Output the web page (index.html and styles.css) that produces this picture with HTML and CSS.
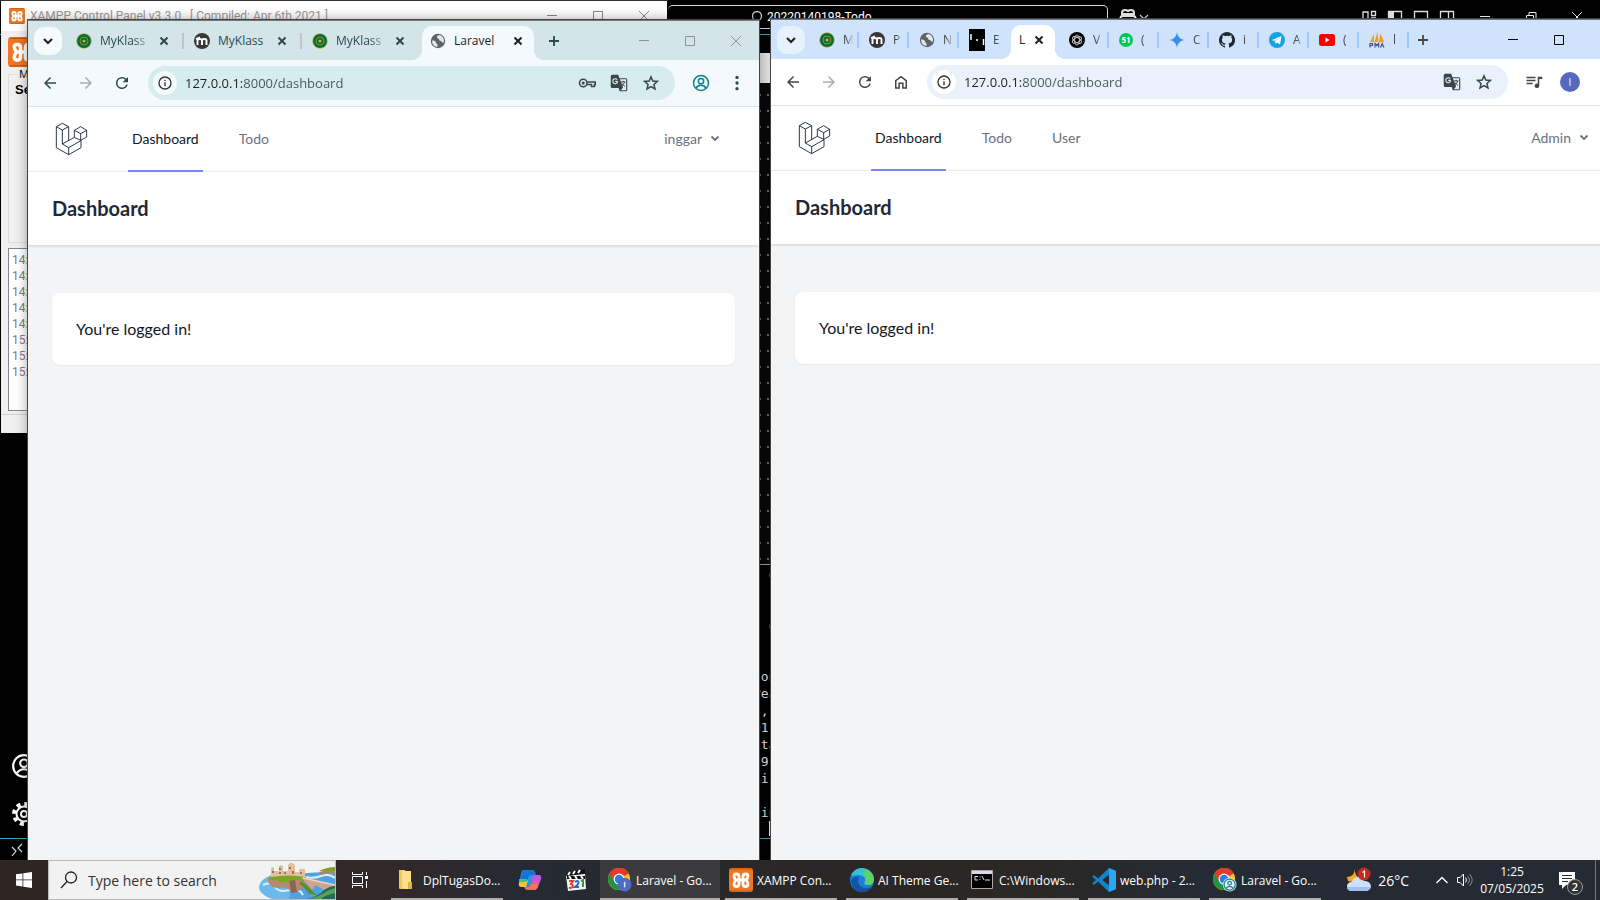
FILE: index.html
```html
<!DOCTYPE html>
<html lang="en">
<head>
<meta charset="utf-8">
<title>Desktop</title>
<link rel="stylesheet" href="styles.css">
</head>
<body>
<svg class="defs" aria-hidden="true">
  <symbol id="i-down" viewBox="0 0 16 16"><path d="M4 6l4 4 4-4" fill="none" stroke="currentColor" stroke-width="2"/></symbol>
  <symbol id="i-x" viewBox="0 0 16 16"><path d="M4.500 4.500l7 7m0-7l-7 7" fill="none" stroke="currentColor" stroke-width="2"/></symbol>
  <symbol id="i-plus" viewBox="0 0 16 16"><path d="M8 3v10M3 8h10" fill="none" stroke="currentColor" stroke-width="1.800"/></symbol>
  <symbol id="i-min" viewBox="0 0 16 16"><path d="M3 7.500h10" stroke="currentColor"/></symbol>
  <symbol id="i-max" viewBox="0 0 16 16"><path d="M3.500 3.500h9v9h-9z" fill="none" stroke="currentColor"/></symbol>
  <symbol id="i-close" viewBox="0 0 16 16"><path d="M3 3l10 10M13 3L3 13" fill="none" stroke="currentColor"/></symbol>
  <symbol id="i-back" viewBox="0 0 24 24"><path d="M20 11H7.800l5.600-5.600L12 4l-8 8 8 8 1.400-1.400L7.800 13H20z" fill="currentColor"/></symbol>
  <symbol id="i-fwd" viewBox="0 0 24 24"><path d="M4 11h12.200l-5.600-5.600L12 4l8 8-8 8-1.400-1.400 5.600-5.600H4z" fill="currentColor"/></symbol>
  <symbol id="i-reload" viewBox="0 0 24 24"><path d="M17.650 6.350A7.950 7.950 0 0 0 12 4a8 8 0 1 0 7.730 10h-2.080A6 6 0 1 1 12 6c1.660 0 3.140.69 4.220 1.780L13 11h7V4z" fill="currentColor"/></symbol>
  <symbol id="i-home" viewBox="0 0 24 24"><path d="M5 10.200V20h4.500v-6.500h5V20H19v-9.800L12 4.800z" fill="none" stroke="currentColor" stroke-width="2"/></symbol>
  <symbol id="i-info" viewBox="0 0 24 24"><circle cx="12" cy="12" r="9" fill="none" stroke="currentColor" stroke-width="2"/><path d="M11 7h2v2h-2zm0 4h2v6h-2z" fill="currentColor"/></symbol>
  <symbol id="i-key" viewBox="0 0 24 24"><circle cx="7" cy="12" r="5" fill="none" stroke="currentColor" stroke-width="2"/><circle cx="7" cy="12" r="2" fill="currentColor"/><path d="M12 10.500h11v3.500h-1v2.500h-4V14h-6" fill="none" stroke="currentColor" stroke-width="2"/></symbol>
  <symbol id="i-translate" viewBox="0 0 24 24"><path d="M3 1h8l1.600 4.500H21a2 2 0 0 1 2 2V21a2 2 0 0 1-2 2h-8l-1.500-4.500H3a2 2 0 0 1-2-2V3a2 2 0 0 1 2-2z" fill="currentColor"/><path d="M13.200 7l4.300 11-3 3.500H21.500V7z" fill="#e7f1f5"/><path d="M14.500 10.500h6M17.500 9v1.500M19.500 10.500c-.5 2-2 4-3.500 5M16 12.500c1 1.500 2 3 4 4" stroke="currentColor" stroke-width="1.300" fill="none"/><path d="M10.200 9.800H7M9.700 7.700a3.300 3.300 0 1 0 .6 2.200" stroke="#e7f1f5" stroke-width="1.500" fill="none"/></symbol>
  <symbol id="i-star" viewBox="0 0 24 24"><path d="M12 3.800l2.400 5.600 6.100.5-4.600 4 1.400 6L12 16.700l-5.300 3.200 1.400-6-4.600-4 6.100-.5z" fill="none" stroke="currentColor" stroke-width="2"/></symbol>
  <symbol id="i-user" viewBox="0 0 24 24"><circle cx="12" cy="12" r="10" fill="none" stroke="currentColor" stroke-width="2"/><circle cx="12" cy="9.500" r="3.500" fill="none" stroke="currentColor" stroke-width="2"/><path d="M5 19c2-3 4-4 7-4s5 1 7 4" fill="none" stroke="currentColor" stroke-width="2"/></symbol>
  <symbol id="i-dots" viewBox="0 0 24 24"><circle cx="12" cy="4.500" r="2.200" fill="currentColor"/><circle cx="12" cy="12" r="2.200" fill="currentColor"/><circle cx="12" cy="19.500" r="2.200" fill="currentColor"/></symbol>
  <symbol id="i-music" viewBox="0 0 24 24"><path d="M2 5h12v2H2zm0 4h12v2H2zm0 4h8v2H2zM17 5h6v3h-4v9a3 3 0 1 1-2-2.800z" fill="currentColor"/></symbol>
  <symbol id="i-seal" viewBox="0 0 16 16"><circle cx="8" cy="8" r="7.300" fill="#0b6b3a" stroke="#c9b532" stroke-width="1" stroke-dasharray="1.500 1"/><circle cx="8" cy="8" r="4" fill="none" stroke="#7d9a2a" stroke-width="1"/><circle cx="8" cy="8" r="1.600" fill="#c2ae2c"/></symbol>
  <symbol id="i-moodle" viewBox="0 0 16 16"><circle cx="8" cy="8" r="8" fill="#373737"/><path d="M3.500 12V7.500C3.500 5.500 8 5.500 8 7.500V12M8 7.500c0-2 4.500-2 4.500 0V12M2 6.200l4-1.800" fill="none" stroke="#fff" stroke-width="1.900"/></symbol>
  <symbol id="i-globe" viewBox="0 0 16 16"><circle cx="8" cy="8" r="7.200" fill="#5f6368"/><path d="M2 7.500c2 0 4 .5 4 2s1.500 1 1.500 2.500V14C4 13.500 2 11 2 7.500zM9 2c-1 1-2.500 1-2 2.500S9 5 9 6.500 12 8 12.500 9.500 14 9 14 8c0-3-2-5.500-5-6z" fill="#dfe8ec"/></symbol>
  <symbol id="i-black" viewBox="0 0 16 22"><path d="M0 0h16v22H0z" fill="#000"/><path d="M2 5v6M14.500 10v6M7 11h2" stroke="#fff" stroke-width="1.500"/></symbol>
  <symbol id="i-gpt" viewBox="0 0 16 16"><circle cx="8" cy="8" r="8" fill="#000"/><g fill="none" stroke="#ccc" stroke-width=".9"><ellipse cx="8" cy="8" rx="2.400" ry="5"/><ellipse cx="8" cy="8" rx="2.400" ry="5" transform="rotate(60 8 8)"/><ellipse cx="8" cy="8" rx="2.400" ry="5" transform="rotate(120 8 8)"/></g></symbol>
  <symbol id="i-spark" viewBox="0 0 16 16"><path d="M8 0c.7 5 3 7.300 8 8-5 .7-7.300 3-8 8-.7-5-3-7.300-8-8 5-.7 7.300-3 8-8z" fill="#3b8de8"/></symbol>
  <symbol id="i-github" viewBox="0 0 16 16"><path d="M8 0a8 8 0 0 0-2.530 15.590c.4.070.55-.17.55-.38v-1.490c-2.010.37-2.530-.49-2.690-.94-.09-.23-.48-.94-.82-1.130-.28-.15-.68-.52-.01-.53.63-.01 1.080.58 1.230.82.720 1.210 1.870.87 2.330.66.070-.52.280-.87.510-1.070-1.780-.2-3.640-.89-3.640-3.950 0-.87.310-1.590.82-2.150-.08-.2-.36-1.020.08-2.120 0 0 .67-.21 2.200.82a7.500 7.500 0 0 1 4 0c1.530-1.040 2.200-.82 2.200-.82.440 1.100.160 1.920.080 2.120.51.560.82 1.270.82 2.150 0 3.070-1.870 3.750-3.650 3.950.29.250.54.730.54 1.480v2.200c0 .21.150.46.550.38A8 8 0 0 0 8 0z" fill="#1f2933"/></symbol>
  <symbol id="i-telegram" viewBox="0 0 16 16"><circle cx="8" cy="8" r="8" fill="#14a3e0"/><path d="M3 8l9.500-4-1.500 8.500-3-2-1.500 1.500-.5-3L10.500 6 5 9z" fill="#fff"/></symbol>
  <symbol id="i-youtube" viewBox="0 0 16 16"><rect y="2" width="16" height="12" rx="2.500" fill="#f00"/><path d="M6.500 5.500v5l4-2.500z" fill="#fff"/></symbol>
  <symbol id="i-sails" viewBox="0 0 16 16"><path d="M1 10L5 2v8zM5.500 10L8.500 0l1 10zM10 10l1-8c2 2 3 5 4 8z" fill="#f59a23"/><path d="M1 15.500v-4h2.500v2H1M6 15.500v-4l1.800 2 1.800-2v4M11.500 15.500l1.700-4 1.700 4" fill="none" stroke="#4a4d80" stroke-width="1.200"/></symbol>
  <symbol id="i-laravel" viewBox="156 63 108 108"><path d="M169 80l18-10 19 10-19 10zV143l37 21 37-21v-22M187 90v42l19 11v21M206 80v42M187 132l36-20M206 143l37-21M223 91l19-11 18 11-18 10zv21l19 9 18-10V91M242 101v20" fill="none" stroke="#1f2937" stroke-width="2.800" stroke-linejoin="round"/></symbol>
  <symbol id="i-xampp" viewBox="0 0 24 24"><rect width="24" height="24" rx="3" fill="#ef7622"/><path d="M1 1h22M1 23h22" stroke="#b9571a"/><path d="M10 10.500V8.500Q10 6 7.500 6T5 8q0 2 2 4-2 2-2 4 0 2.500 2.500 2.500T10 16v-2M14 10.500V8.500Q14 6 16.500 6T19 8q0 2-2 4 2 2 2 4 0 2.500-2.500 2.500T14 16v-2M7.500 12h9" fill="none" stroke="#fff" stroke-width="2.800" stroke-linecap="round" stroke-linejoin="round"/></symbol>
  <symbol id="i-chrome" viewBox="0 0 24 24"><circle cx="12" cy="12" r="12" fill="#fbc116"/><path d="M12 12L1.600 6A12 12 0 0 1 22.400 6z" fill="#e33b2e"/><path d="M1.600 6A12 12 0 0 0 12 24l5.200-9L12 12z" fill="#229342"/><path d="M12 6h10.400A12 12 0 0 0 1.600 6l5.200 9z" fill="#e33b2e"/><circle cx="12" cy="12" r="6" fill="#fff"/><circle cx="12" cy="12" r="4.700" fill="#2b7de9"/></symbol>
</svg>

<main class="desktop">
  <section class="vscode" aria-label="Code editor">
    <header class="code-top">
      <span class="code-back"></span>
      <button class="code-search"><svg width="14" height="14" viewBox="0 0 14 14"><circle cx="8" cy="6" r="4.500" fill="none" stroke="#ccc" stroke-width="1.300"/><path d="M5 9l-4 4" stroke="#ccc"/></svg>20220140198-Todo</button>
      <button class="code-copilot" aria-label="Copilot"><svg width="32" height="16" viewBox="0 0 32 16"><path d="M4 6V4q0-3 3-3t3 2q0-2 3-2t3 3v2M4 7q-2 1-2 5v2h16v-2q0-4-2-5zM7 10v3M13 10v3M4 5h12" fill="none" stroke="#e0e0e0" stroke-width="2"/><path d="M22 6l4 4 4-4" fill="none" stroke="#ccc" stroke-width="1.200"/></svg></button>
      <div class="code-layouts">
        <button aria-label="Layout"><svg width="16" height="16" viewBox="0 0 16 16"><path d="M2 15V3h5v12M10.500 2.500h4v4h-4zM10 9h5" fill="none" stroke="#ddd" stroke-width="1.300"/></svg></button>
        <button aria-label="Side bar"><svg width="16" height="16" viewBox="0 0 16 16"><path d="M1.500 2.500h13v12h-13z" fill="none" stroke="#ddd" stroke-width="1.300"/><path d="M2 3h5v12H2z" fill="#ddd"/></svg></button>
        <button aria-label="Panel"><svg width="16" height="16" viewBox="0 0 16 16"><path d="M1.500 2.500h13v12h-13z" fill="none" stroke="#ddd" stroke-width="1.300"/></svg></button>
        <button aria-label="Secondary side bar"><svg width="16" height="16" viewBox="0 0 16 16"><path d="M1.500 2.500h13v12h-13zM9.500 3v12" fill="none" stroke="#ddd" stroke-width="1.300"/></svg></button>
      </div>
      <div class="caps caps-light">
        <button aria-label="Minimize"><svg><use href="#i-min"/></svg></button>
        <button aria-label="Restore"><svg viewBox="0 0 16 16"><path d="M3.500 6.500h7v7h-7zM6 6V3.500h7v7h-2" fill="none" stroke="currentColor"/></svg></button>
        <button aria-label="Close"><svg><use href="#i-close"/></svg></button>
      </div>
    </header>
    <div class="code-mid">
      <nav class="activity" aria-label="Activity">
        <button aria-label="Accounts"><svg width="26" height="26"><use href="#i-user"/></svg></button>
        <button aria-label="Manage"><svg width="26" height="26" viewBox="0 0 26 26"><circle cx="13" cy="13" r="10" fill="none" stroke="#fff" stroke-width="4" stroke-dasharray="4 3.850"/><circle cx="13" cy="13" r="7.500" fill="#000" stroke="#fff" stroke-width="2"/><circle cx="13" cy="13" r="3" fill="none" stroke="#fff" stroke-width="2"/></svg></button>
      </nav>
      <div class="code-main">
        <div class="code-tabs"></div>
        <div class="minimap"></div>
        <pre class="terminal"><b>&#8226; </b><i>g</i>


<b>&#8226; </b><i>g</i>


lon
rea
),
011
ita
/9s
hii

gin
<b>&#8226; </b><span class="cursor"></span></pre>
      </div>
    </div>
    <footer class="code-status"><svg width="12" height="14" viewBox="0 0 12 14"><path d="M1 4l4 4-4 5M11 1L7 5l4 4" fill="none" stroke="#ddd" stroke-width="1.200"/></svg></footer>
  </section>

  <section class="xampp" aria-label="XAMPP Control Panel">
    <header class="xampp-bar">
      <svg width="16" height="16"><use href="#i-xampp"/></svg>
      <span class="xampp-title">XAMPP Control Panel v3.3.0 &nbsp; [ Compiled: Apr 6th 2021 ]</span>
      <div class="caps caps-grey">
        <button aria-label="Minimize"><svg><use href="#i-min"/></svg></button>
        <button aria-label="Maximize"><svg><use href="#i-max"/></svg></button>
        <button aria-label="Close"><svg><use href="#i-close"/></svg></button>
      </div>
    </header>
    <div class="xampp-body">
      <svg class="xampp-logo" width="30" height="30"><use href="#i-xampp"/></svg>
      <fieldset class="modules"><legend>Modules</legend><b>Service</b></fieldset>
      <div class="log">14:<br>14:<br>14:<br>14:<br>14:<br>15:<br>15:<br>15:</div>
    </div>
    <footer class="xampp-foot"></footer>
  </section>

  <section class="browser left" aria-label="Browser, inggar">
    <header class="strip">
      <button class="drop" aria-label="Search tabs"><svg width="16" height="16"><use href="#i-down"/></svg></button>
      <div class="tab"><button class="tab-main"><svg width="16" height="16"><use href="#i-seal"/></svg><span>MyKlass</span></button><button class="tab-x" aria-label="Close tab"><svg width="16" height="16"><use href="#i-x"/></svg></button></div>
      <div class="tab"><button class="tab-main"><svg width="16" height="16"><use href="#i-moodle"/></svg><span class="full">MyKlass</span></button><button class="tab-x" aria-label="Close tab"><svg width="16" height="16"><use href="#i-x"/></svg></button></div>
      <div class="tab last"><button class="tab-main"><svg width="16" height="16"><use href="#i-seal"/></svg><span>MyKlass</span></button><button class="tab-x" aria-label="Close tab"><svg width="16" height="16"><use href="#i-x"/></svg></button></div>
      <div class="tab active"><button class="tab-main"><svg width="16" height="16"><use href="#i-globe"/></svg><span class="full">Laravel</span></button><button class="tab-x" aria-label="Close tab"><svg width="16" height="16"><use href="#i-x"/></svg></button></div>
      <button class="new" aria-label="New tab"><svg width="16" height="16"><use href="#i-plus"/></svg></button>
      <div class="caps caps-dim">
        <button aria-label="Minimize"><svg><use href="#i-min"/></svg></button>
        <button aria-label="Maximize"><svg><use href="#i-max"/></svg></button>
        <button aria-label="Close"><svg><use href="#i-close"/></svg></button>
      </div>
    </header>
    <div class="toolbar">
      <button class="tool" aria-label="Back"><svg><use href="#i-back"/></svg></button>
      <button class="tool off" aria-label="Forward"><svg><use href="#i-fwd"/></svg></button>
      <button class="tool" aria-label="Reload"><svg><use href="#i-reload"/></svg></button>
      <div class="omni">
        <button class="site" aria-label="Site information"><svg><use href="#i-info"/></svg></button>
        <input class="url" type="text" aria-label="Address" value="127.0.0.1:8000/dashboard">
        <button class="act" aria-label="Passwords"><svg><use href="#i-key"/></svg></button>
        <button class="act" aria-label="Translate"><svg><use href="#i-translate"/></svg></button>
        <button class="act" aria-label="Bookmark"><svg><use href="#i-star"/></svg></button>
      </div>
      <button class="tool teal" aria-label="Profile"><svg><use href="#i-user"/></svg></button>
      <button class="tool" aria-label="Menu"><svg><use href="#i-dots"/></svg></button>
    </div>
    <div class="page">
      <nav class="nav">
        <a class="logo" href="#" aria-label="Laravel"><svg width="36" height="36"><use href="#i-laravel"/></svg></a>
        <a class="link on" href="#">Dashboard</a>
        <a class="link" href="#">Todo</a>
        <button class="who">inggar<svg width="16" height="16" viewBox="0 0 16 16"><path d="M4.500 6.500L8 10l3.500-3.500" fill="none" stroke="#6b7280" stroke-width="1.800"/></svg></button>
      </nav>
      <div class="head"><h1>Dashboard</h1></div>
      <div class="body"><div class="card">You're logged in!</div></div>
    </div>
  </section>

  <section class="browser right" aria-label="Browser, Admin">
    <header class="strip">
      <button class="drop" aria-label="Search tabs"><svg width="16" height="16"><use href="#i-down"/></svg></button>
      <div class="tab"><button class="tab-main"><svg width="16" height="16"><use href="#i-seal"/></svg><span>M</span></button></div>
      <div class="tab"><button class="tab-main"><svg width="16" height="16"><use href="#i-moodle"/></svg><span>P</span></button></div>
      <div class="tab"><button class="tab-main"><svg width="16" height="16"><use href="#i-globe"/></svg><span>N</span></button></div>
      <div class="tab last"><button class="tab-main"><svg width="16" height="22"><use href="#i-black"/></svg><span>E</span></button></div>
      <div class="tab active"><button class="tab-main"><span class="full">L</span></button><button class="tab-x" aria-label="Close tab"><svg width="16" height="16"><use href="#i-x"/></svg></button></div>
      <div class="tab"><button class="tab-main"><svg width="16" height="16"><use href="#i-gpt"/></svg><span>V</span></button></div>
      <div class="tab"><button class="tab-main"><em class="count">51</em><span>(</span></button></div>
      <div class="tab"><button class="tab-main"><svg width="16" height="16"><use href="#i-spark"/></svg><span>C</span></button></div>
      <div class="tab"><button class="tab-main"><svg width="16" height="16"><use href="#i-github"/></svg><span>i</span></button></div>
      <div class="tab"><button class="tab-main"><svg width="16" height="16"><use href="#i-telegram"/></svg><span>A</span></button></div>
      <div class="tab"><button class="tab-main"><svg width="16" height="16"><use href="#i-youtube"/></svg><span>(</span></button></div>
      <div class="tab"><button class="tab-main"><svg width="16" height="16"><use href="#i-sails"/></svg><span>l</span></button></div>
      <button class="new" aria-label="New tab"><svg width="16" height="16"><use href="#i-plus"/></svg></button>
      <div class="caps">
        <button aria-label="Minimize"><svg><use href="#i-min"/></svg></button>
        <button aria-label="Maximize"><svg><use href="#i-max"/></svg></button>
        <button aria-label="Close"><svg><use href="#i-close"/></svg></button>
      </div>
    </header>
    <div class="toolbar">
      <button class="tool" aria-label="Back"><svg><use href="#i-back"/></svg></button>
      <button class="tool off" aria-label="Forward"><svg><use href="#i-fwd"/></svg></button>
      <button class="tool" aria-label="Reload"><svg><use href="#i-reload"/></svg></button>
      <button class="tool" aria-label="Home"><svg><use href="#i-home"/></svg></button>
      <div class="omni">
        <button class="site" aria-label="Site information"><svg><use href="#i-info"/></svg></button>
        <input class="url" type="text" aria-label="Address" value="127.0.0.1:8000/dashboard">
        <button class="act" aria-label="Translate"><svg><use href="#i-translate"/></svg></button>
        <button class="act" aria-label="Bookmark"><svg><use href="#i-star"/></svg></button>
      </div>
      <button class="tool" aria-label="Media"><svg><use href="#i-music"/></svg></button>
      <button class="tool"><em class="avatar">I</em></button>
      <button class="tool" aria-label="Menu"><svg><use href="#i-dots"/></svg></button>
    </div>
    <div class="page">
      <nav class="nav">
        <a class="logo" href="#" aria-label="Laravel"><svg width="36" height="36"><use href="#i-laravel"/></svg></a>
        <a class="link on" href="#">Dashboard</a>
        <a class="link" href="#">Todo</a>
        <a class="link" href="#">User</a>
        <button class="who">Admin<svg width="16" height="16" viewBox="0 0 16 16"><path d="M4.500 6.500L8 10l3.500-3.500" fill="none" stroke="#6b7280" stroke-width="1.800"/></svg></button>
      </nav>
      <div class="head"><h1>Dashboard</h1></div>
      <div class="body"><div class="card">You're logged in!</div></div>
    </div>
  </section>
</main>

<footer class="taskbar">
  <button class="start" aria-label="Start"><svg width="16" height="16" viewBox="0 0 16 16"><path d="M0 2.300l6.500-.9v6.100H0zM7.300 1.300L16 0v7.500H7.300zM0 8.300h6.500v6.200L0 13.600zM7.300 8.300H16V16l-8.700-1.300z" fill="#fff"/></svg></button>
  <label class="search">
    <svg width="18" height="18" viewBox="0 0 18 18"><circle cx="11" cy="6.500" r="5.500" fill="none" stroke="#222" stroke-width="1.300"/><path d="M7 10.500L1 17" stroke="#222" stroke-width="1.300"/></svg>
    <input type="text" placeholder="Type here to search" aria-label="Type here to search">
    <svg class="castle" width="76" height="36" viewBox="0 0 76 36">
      <ellipse cx="28" cy="24" rx="28" ry="14" fill="#6bb8ec"/><path d="M34 12q20-4 42-2v26H30z" fill="#4fa3e2"/>
      <path d="M4 22q8-4 12 2t14 3 14 5M46 14q8 2 16-1t14 2" fill="none" stroke="#d9effb" stroke-width="2"/>
      <path d="M9 15q14-6 38 0l-2 9q-6 6-13 4-6-5-12-3-8 0-11-6z" fill="#b58a72"/><path d="M30 17l6 0 2 12-6 1z" fill="#8c6455"/>
      <path d="M10 14q14-5 36-1 3 3-1 5-9-2-14 0-8 4-14-1-6 1-7-3z" fill="#7aa52a"/>
      <path d="M12 14V5l1-1 2 1v3h5V3l2-1 2 1v5h5V2l3-3 4 3v7h4V6h6v8q-16-3-34 0z" fill="#e3bfa0"/>
      <path d="M14 8v2M21 5v2M21 9v2M31 4v2M34 8v3M42 9v2M26 9v2" stroke="#694a45" stroke-width="1.300"/>
      <path d="M42 14l34 8v6l-6-2-5 1-8-5-4 5z" fill="#cda58d"/><path d="M44 15l32 7" stroke="#efd4be" stroke-width="1.500"/>
      <path d="M42 18q8 5 12 11l4 3-8-1q-4-7-10-10z" fill="#5f8f24"/>
      <path d="M60 9l16-4v6q-8-1-14 1z" fill="#a58c70"/><path d="M60 8q8-4 16-4v4z" fill="#7aa52a"/>
      <path d="M48 36q12-3 17-9 6-4 11-4v13z" fill="#1f6b58"/><path d="M48 36q14-3 20-8l8-3v5q-10 2-14 6z" fill="#5aa05a"/>
    </svg>
  </label>
  <button class="view" aria-label="Task View"><svg width="16" height="16" viewBox="0 0 16 16"><path d="M.500 0v2.500h10V0M.500 16v-2.500h10V16M.500 4.500h10v7H.500zM14.500 0v3M14.500 9v7" fill="none" stroke="#fff"/><path d="M13 4h3v3h-3z" fill="#fff"/></svg></button>
  <button class="task first"><svg width="24" height="24" viewBox="0 0 24 24"><path d="M4 2h6l1 19H5q-1 0-1-1z" fill="#f0c95c"/><path d="M7 3h9v16h1v2H10l-3-2z" fill="#ffe08a"/><path d="M13 14h4v7h-4z" fill="#e3b341"/></svg><span>DplTugasDo...</span></button>
  <button class="pin" aria-label="Copilot"><svg width="24" height="24" viewBox="0 0 24 24"><path d="M5 2h9q3 0 2 3l-3 10q-1 4-4 4H4q-4 0-3-4l2-9q1-4 2-4z" fill="#1e9be0"/><path d="M2 12h8l-2 7H4q-4 0-3-4z" fill="#f5c33b"/><path d="M5 2h9q3 0 4 5h-5q-2 0-3 3l-1 3H2z" fill="#1674d8"/><path d="M1 11h8l-1 3H1z" fill="#43c07c"/><path d="M15 7h5q4 0 3 4l-3 8q-1 3-4 3H9q-2 0-3-3h3q3 0 4-4z" fill="#e85aa0"/><path d="M15 7h5q4 0 3 4l-1 2h-8z" fill="#b45ce8"/><path d="M7 20q5 0 6-4h7q-1 6-4 6H9z" fill="#f7725c"/></svg></button>
  <button class="pin" aria-label="Media player"><svg width="24" height="24" viewBox="0 0 24 24"><path d="M2 8l19-2 1 15-18 2z" fill="#f2f2f2"/><path d="M2 5l19-4v4L3 8zM3 8h18v3H3z" fill="#111"/><path d="M4 7l2-3M9 6l2-3M14 5l2-3M5 8l2 3M11 8l2 3M17 8l2 3" stroke="#fff" stroke-width="2"/><path d="M5 13h4l-2 3q3 1 1 3.500l-3 .5" fill="none" stroke="#d6452b" stroke-width="2"/><path d="M11 14q3-2 3.500 0T11 19h4" fill="none" stroke="#2a6cc4" stroke-width="2"/><path d="M17 13l2-1v7" fill="none" stroke="#3a9a3a" stroke-width="2"/></svg></button>
  <button class="task now"><svg width="26" height="26" viewBox="0 0 26 26"><use href="#i-chrome" width="24" height="24"/><circle cx="18" cy="18" r="7.500" fill="#5469c0"/><path d="M18 15v6" stroke="#dfe4ff" stroke-width="1.600"/></svg><span>Laravel - Go...</span></button>
  <button class="task"><svg width="24" height="24"><use href="#i-xampp"/></svg><span>XAMPP Con...</span></button>
  <button class="task"><svg width="24" height="24" viewBox="0 0 24 24"><circle cx="12" cy="12" r="12" fill="#1c7fd6"/><path d="M1 8Q4 0 12 0q11 1 12 11 0 6-6 6-5 0-3-4 1-5-6-6-5 0-8 1z" fill="#35c1d0"/><path d="M15 1q9 3 9 11-1 5-6 5-5 0-3-4 2-4-1-6z" fill="#5bd365"/><path d="M8 13q-1 8 9 9l4-2Q15 26 7 23 1 19 1 12q3-4 8-3z" fill="#0f56a8"/><path d="M9 10q-3 7 5 10 5 1 8-2-4 7-11 6Q4 20 9 10z" fill="#1b4f9c"/></svg><span>AI Theme Ge...</span></button>
  <button class="task"><svg width="24" height="24" viewBox="0 0 24 24"><path d="M.500 2.500h21v18H.500z" fill="#000" stroke="#aaa"/><path d="M1 3h20v3H1z" fill="#d8dce2"/><path d="M7 8.500H4V12h3M9 8.500v1M9 11v1M11 8l2 4M14 12h5" stroke="#ddd" fill="none"/></svg><span>C:\Windows...</span></button>
  <button class="task"><svg width="24" height="24" viewBox="0 0 24 24"><path d="M17 0l7 3v18l-7 3L6 13.500 2 17 0 15.500 4 12 0 8.500 2 7l4 3.500zm0 7l-7 5 7 5z" fill="#1283cf"/><path d="M17 0l7 3v18l-7 3z" fill="#2fa4f2"/></svg><span>web.php - 2...</span></button>
  <button class="task"><svg width="26" height="26" viewBox="0 0 26 26"><use href="#i-chrome" width="24" height="24"/><circle cx="18" cy="18" r="7.500" fill="#c6e6ee"/><circle cx="18" cy="18" r="6" fill="#ddeff4" stroke="#26808f" stroke-width="1.300"/><circle cx="18" cy="16.500" r="2" fill="none" stroke="#26808f" stroke-width="1.300"/><path d="M14 22q4-4 8 0" fill="none" stroke="#26808f" stroke-width="1.300"/></svg><span>Laravel - Go...</span></button>
  <button class="weather"><svg width="26" height="26" viewBox="0 0 26 26"><path d="M9 2q-1 7 6 10l-4 4-9-2-1-4q7 0 8-8z" fill="#f6a823"/><path d="M6 24q-5 0-5-4.500T6 15q1-5 6-5t6 4q6 0 7 5-1 5-6 5z" fill="#cfe0fa"/><path d="M1 20q1 4 5 4h13q5 0 6-4z" fill="#9fc0f2"/><circle cx="18" cy="7" r="6.500" fill="#c42b1c"/><path d="M16.500 5.500L18.500 4v6.500" fill="none" stroke="#fff" stroke-width="1.200"/></svg><span>26°C</span></button>
  <button class="tray" aria-label="Hidden icons"><svg width="14" height="10" viewBox="0 0 14 10"><path d="M1.500 8L7 2.500 12.500 8" fill="none" stroke="#fff" stroke-width="1.400"/></svg></button>
  <button class="tray" aria-label="Volume"><svg width="18" height="16" viewBox="0 0 18 16"><path d="M1.500 5.500H4L7.500 2v12L4 10.500H1.500z" fill="none" stroke="#fff"/><path d="M9.500 5.500q2 2.500 0 5" fill="none" stroke="#fff"/><path d="M11.500 4q4 4 0 8M13.500 2q5.500 6 0 12" fill="none" stroke="#888"/></svg></button>
  <button class="clock"><span>1:25</span><span>07/05/2025</span></button>
  <button class="notes" aria-label="Notifications"><svg width="16" height="17" viewBox="0 0 16 17"><path d="M0 0h16v13H7l-4 4v-4H0z" fill="#fff"/><path d="M3 3.500h10M3 6.500h10M3 9.500h6" stroke="#262a32"/></svg><em>2</em></button>
</footer>
</body>
</html>
```
FILE: styles.css
```css
* { box-sizing: border-box; }
body {
  margin: 0;
  height: 100vh;
  display: flex;
  flex-direction: column;
  overflow: hidden;
  background: #000;
  font-family: "Open Sans", "Noto Sans", sans-serif;
  font-size: 12px;
}
button, input { font: inherit; color: inherit; border: 0; padding: 0; margin: 0; background: none; }
button { display: flex; align-items: center; justify-content: center; flex: none; }
svg { display: block; flex: none; }
em { font-style: normal; }
.defs { position: absolute; width: 0; height: 0; }

.desktop { flex: 1; position: relative; overflow: hidden; min-height: 0; }

/* caption buttons */
.caps { display: flex; margin-left: auto; align-self: stretch; color: #000; }
.caps button { width: 46px; }
.caps svg { width: 16px; height: 16px; }
.caps-light { color: #e8e8e8; margin-left: 0; }
.caps-grey { color: #888; }
.caps-dim { color: #8a9598; }

/* editor window */
.vscode { position: absolute; inset: 0; display: flex; flex-direction: column; background: #000; color: #fff; }
.code-top { height: 35px; flex: none; display: flex; align-items: center; border-bottom: 1px solid #3ba3c0; }
.code-back { width: 668px; flex: none; align-self: flex-start; border-top: 1px solid #333; }
.code-search {
  width: 440px; height: 24px; border: 1px solid #d8d8d8; border-left: 0; border-radius: 5px;
  justify-content: flex-start; gap: 4px; padding-left: 81px; color: #fff; font-family: Roboto, sans-serif; font-size: 12px;
}
.code-copilot { margin-left: 10px; }
.code-layouts { display: flex; gap: 10px; margin-left: auto; margin-right: 7px; }
.code-mid { flex: 1; display: flex; min-height: 0; }
.activity { width: 48px; display: flex; flex-direction: column; justify-content: flex-end; gap: 22px; padding-bottom: 11px; align-items: center; }
.code-main { flex: 1; margin-left: 705px; display: flex; flex-direction: column; min-width: 0; }
.code-tabs { height: 48px; flex: none; border-top: 18px solid #000; background: #e0e0e0; }
.minimap {
  flex: 1; background-color: #080808;
  background-image: radial-gradient(circle, #66665c 1px, transparent 1px);
  background-size: 8px 16px;
  background-position: 3px 4px;
}
.terminal {
  height: 274px; flex: none; margin: 0; border-top: 1px solid #999; padding-top: 1px; overflow: hidden;
  font: 13px/17px "DejaVu Sans Mono", monospace; color: #ddd;
}
.terminal b { color: #d98c4a; }
.terminal i { color: #7fcf2f; font-style: normal; }
.cursor { display: inline-block; width: 8px; height: 15px; border: 1px solid #ddd; vertical-align: top; }
.code-status { height: 22px; flex: none; border-top: 1px solid #3ba3c0; padding: 4px 11px; }

/* xampp window */
.xampp {
  position: absolute; left: 1px; top: 1px; width: 666px; height: 432px;
  display: flex; flex-direction: column; background: #f0f0f0; color: #000;
}
.xampp-bar { height: 30px; flex: none; display: flex; align-items: center; gap: 5px; padding-left: 8px; background: #fff; color: #999; }
.xampp-title { font-family: Roboto, sans-serif; font-size: 12px; }
.xampp-body { flex: 1; display: flex; flex-direction: column; padding: 6px 7px 3px; min-height: 0; }
.xampp-logo { flex: none; }
.modules { height: 176px; flex: none; margin: 0; border: 1px solid #dcdcdc; padding: 0 6px; }
.modules legend { font-size: 11px; line-height: 14px; padding: 0 4px; }
.modules b { font: bold 13px/16px "Liberation Sans", sans-serif; }
.log { flex: 1; margin-top: 5px; border: 1px solid #828790; background: #fff; padding: 3px; color: #808080; font-family: Roboto, sans-serif; font-size: 12px; line-height: 16px; }
.xampp-foot { height: 19px; flex: none; border-top: 1px solid #d0d0d0; }

/* browser windows */
.browser { position: absolute; bottom: 0; display: flex; flex-direction: column; border-top: 1px solid #777; }
.left { left: 28px; top: 20px; width: 731px; box-shadow: 0 0 12px rgba(0,0,0,.4), 0 0 0 1px #555; --strip: #d3e5e8; --bar: #f3f9fc; --omni: #d6ecef; --chip: #f5fafc; --ink: #2a4a50; --line: #d3e5e8; --sep: #c0c6c8; --tab: 118px; }
.right { left: 771px; top: 19px; right: -28px; box-shadow: 0 0 0 1px #444; --strip: #cfe3fc; --bar: #fff; --omni: #eaf1fb; --chip: #fff; --ink: #444746; --line: #e0e2e4; --sep: #a0c8fa; --tab: 50px; }
.strip { height: 39px; flex: none; display: flex; align-items: center; background: var(--strip); padding-left: 6px; color: var(--ink); }
.drop { width: 28px; height: 28px; border-radius: 10px; background: var(--chip); color: #1f1f1f; margin-right: 4px; }
.right .drop { background: #e8f1fe; }
.tab { width: var(--tab); height: 34px; flex: none; display: flex; align-items: center; position: relative; padding: 0 6px 0 10px; }
.tab::after { content: ""; position: absolute; right: 0; top: 9px; width: 2px; height: 16px; background: var(--sep); }
.tab.last::after, .tab.active::after { display: none; }
.tab-main { flex: 1; min-width: 0; gap: 8px; justify-content: flex-start; }
.tab-main span { white-space: nowrap; flex: 1; text-align: left; mask-image: linear-gradient(90deg, #000 30%, transparent 95%); }
.left .tab { padding-right: 12px; }
.left .tab-main span { mask-image: linear-gradient(90deg, #000 60%, transparent 95%); }
.left .tab-main .full, .right .tab-main .full { mask-image: none; }
.right .tab:not(.active) { padding-right: 5px; }
.tab.active, .left .tab.active {
  align-self: flex-end; margin: 0 4px 0 2px; width: calc(var(--tab) - 6px);
  background: var(--bar); border-radius: 10px 10px 0 0; color: #1f1f1f; padding: 0 8px 5px;
}
.tab.active::before {
  content: ""; position: absolute; left: -10px; right: -10px; bottom: 0; height: 10px;
  background: radial-gradient(circle at 0 0, transparent 10px, var(--bar) 10px) left / 10px 10px no-repeat,
    radial-gradient(circle at 100% 0, transparent 10px, var(--bar) 10px) right / 10px 10px no-repeat;
}
.new { width: 28px; height: 28px; margin-left: 2px; }
.right .new { margin-left: 0; }
.count { width: 14px; height: 14px; border-radius: 7px; background: #00c853; color: #fff; font-size: 8px; font-weight: 700; line-height: 14px; text-align: center; }

.toolbar { height: 47px; flex: none; display: flex; align-items: center; padding: 0 4px; background: var(--bar); border-bottom: 1px solid var(--line); color: var(--ink); }
.tool { width: 36px; height: 34px; }
.tool svg { width: 18px; height: 18px; }
.off { color: #a9adb0; }
.teal { color: #0b7f90; }
.omni { flex: 1; min-width: 0; height: 34px; margin: 0 8px; border-radius: 17px; background: var(--omni); display: flex; align-items: center; padding: 0 8px 0 5px; color: #3c4548; }
.site { width: 24px; height: 24px; border-radius: 12px; background: var(--chip); color: #333; }
.site svg { width: 16px; height: 16px; }
.url {
  flex: 1; min-width: 0; margin-left: 8px; height: 24px; font-size: 13px; color: #1f1f1f;
  background: linear-gradient(90deg, #1f1f1f 58px, #4a5356 58px) text;
  -webkit-text-fill-color: transparent;
}
.act { width: 32px; height: 32px; }
.act svg { width: 18px; height: 18px; }
.avatar { width: 20px; height: 20px; border-radius: 10px; background: #5469c0; color: #fff; font-size: 10px; line-height: 20px; }

.page { flex: 1; background: #f3f4f6; font-family: Lato, sans-serif; color: #111827; min-height: 0; }
.nav { height: 65px; display: flex; align-items: center; padding: 0 24px; background: #fff; border-bottom: 1px solid #f0f1f3; font-size: 14px; }
.logo { margin-right: 8px; }
.link { height: 65px; line-height: 63px; margin-left: 32px; padding: 0 4px; margin-bottom: -1px; color: #6b7280; text-decoration: none; font-size: 14px; border-bottom: 2px solid transparent; }
.link.on { color: #111827; border-color: #7f88f7; }
.who { margin-left: auto; padding: 0 12px 2px; gap: 5px; color: #6b7280; }
.head { position: relative; background: #fff; padding: 24px; box-shadow: 0 1px 3px rgba(0,0,0,.15); }
.head h1 { margin: 0; font-size: 20px; line-height: 25px; font-weight: 700; color: #1f2937; }
.body { padding: 48px 24px; }
.card { background: #fff; border-radius: 8px; padding: 24px; font-size: 16px; line-height: 24px; box-shadow: 0 1px 2px rgba(0,0,0,.06); }

/* taskbar */
.taskbar { height: 40px; flex: none; display: flex; align-items: stretch; color: #fff; background: linear-gradient(90deg, #2e2422 0, #33292a 24%, #252a34 33%, #292829 45%, #2c2626 54%, #2a2827 66%, #252b35 75%, #262a33 100%); }
.start, .view { width: 48px; }
.search { width: 288px; flex: none; display: flex; align-items: center; background: #f2f2f2; border: 1px solid #bbb; padding-left: 11px; }
.search input { flex: 1; min-width: 0; margin-left: 10px; font-size: 14px; }
.search input::placeholder { color: #333; opacity: 1; }
.castle { align-self: flex-end; }
.view { margin-right: 3px; }
.pin { width: 46px; }
.task { width: 120px; margin-right: 1px; gap: 4px; justify-content: flex-start; padding-left: 8px; position: relative; white-space: nowrap; }
.task.first { margin-right: 0; }
.now { margin-left: 1px; }
.task span { flex: 1; text-align: left; }
.task svg { width: 24px; height: 24px; }
.task::after { content: ""; position: absolute; left: 4px; right: 4px; bottom: 0; height: 2px; background: #b0adab; }
.now { background: #3b3b3e; }
.now::after { left: 0; right: 0; }
.weather { margin-left: auto; gap: 6px; font-size: 14px; margin-right: 21px; }
.tray { width: 23px; }
.clock { flex-direction: column; width: 72px; line-height: 17px; }
.notes { width: 48px; position: relative; border-right: 1px solid #777; margin-right: 4px; justify-content: flex-start; padding-left: 11px; }
.notes em { position: absolute; left: 19px; top: 19px; width: 16px; height: 16px; border-radius: 8px; background: #333; border: 1px solid #999; font-size: 11px; font-weight: 600; line-height: 14px; text-align: center; }
```
